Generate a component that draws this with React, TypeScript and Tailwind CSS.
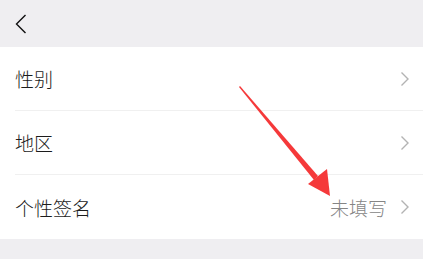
import React from 'react';

const rows = [
  { label: '性别', value: '' },
  { label: '地区', value: '' },
  { label: '个性签名', value: '未填写' },
];

function Chevron({ className }: { className?: string }) {
  return (
    <svg width="10" height="16" viewBox="0 0 10 16" className={className} fill="none">
      <path d="M1.5 1.5 L8 8 L1.5 14.5" stroke="currentColor" strokeWidth="1.4" />
    </svg>
  );
}

export default function App() {
  return (
    <div
      className="relative w-[423px] h-[259px] overflow-hidden bg-[#efeef1]"
      style={{ fontFamily: '"Noto Sans CJK SC", "Noto Sans", sans-serif' }}
    >
      {/* header */}
      <div className="h-[47px] flex items-center pl-[15px]">
        <svg width="12" height="20" viewBox="0 0 12 20" fill="none">
          <path d="M10.5 1 L1.5 10 L10.5 19" stroke="#111" strokeWidth="1.4" />
        </svg>
      </div>

      {/* list */}
      <div className="bg-white">
        {rows.map((row, i) => (
          <div key={row.label} className="pl-[15px]">
            <div
              className={`h-16 flex items-center pr-[13px] ${
                i < rows.length - 1 ? 'border-b border-[#f0f0f0]' : ''
              }`}
            >
              <span className="text-[19px] font-light text-[#1c1c1c] leading-none">{row.label}</span>
              <div className="ml-auto flex items-center gap-[13px]">
                {row.value && (
                  <span className="text-[19px] font-light text-[#858585] leading-none">{row.value}</span>
                )}
                <Chevron className="text-[#b3b3b3]" />
              </div>
            </div>
          </div>
        ))}
      </div>

      {/* annotation arrow */}
      <svg
        className="absolute left-0 top-0 pointer-events-none"
        width="423"
        height="259"
        viewBox="0 0 423 259"
      >
        <polygon points="239,87 240,86 318,176 314,180" fill="#f5393a" />
        <polygon points="330,196 308,184 327,169" fill="#f5393a" />
      </svg>
    </div>
  );
}
